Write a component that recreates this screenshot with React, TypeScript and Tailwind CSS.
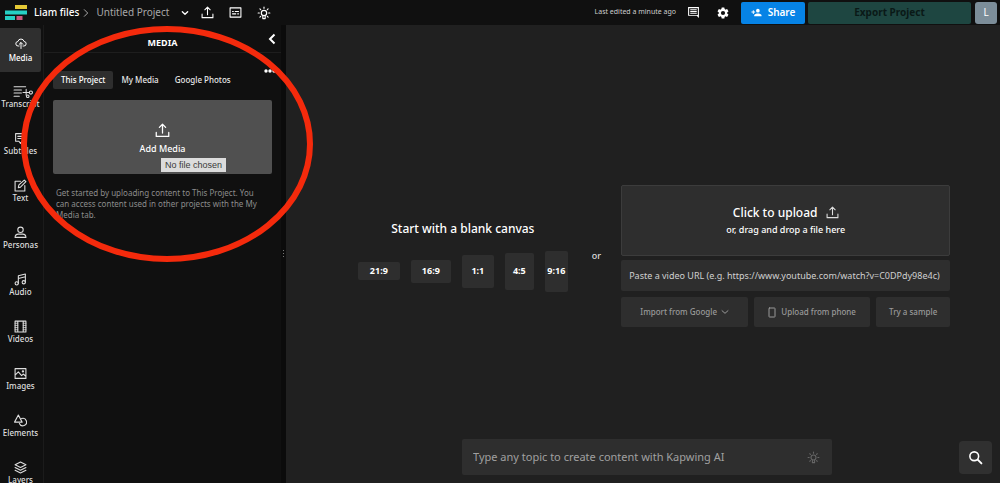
import type { ReactNode } from "react";

function Svg({ children, className, box = "0 0 24 24" }: { children: ReactNode; className: string; box?: string }) {
  return (
    <svg
      viewBox={box}
      className={className}
      fill="none"
      stroke="currentColor"
      strokeWidth="2"
      strokeLinecap="round"
      strokeLinejoin="round"
      aria-hidden="true"
    >
      {children}
    </svg>
  );
}

function UploadIcon({ className }: { className: string }) {
  return (
    <Svg className={className}>
      <path d="M2 15v6.500h20V15M12 16V2.500M7 7l5-5 5 5" />
    </Svg>
  );
}

function BulbIcon({ className }: { className: string }) {
  return (
    <Svg className={className}>
      <circle cx="12" cy="12" r="4.600" />
      <path d="M10 17v4.500h4V17M12 4V2M4 12H2M22 12h-2M6.300 6.300 5 5M17.700 6.300 19 5M6.300 17.700 5 19M17.700 17.700 19 19" />
    </Svg>
  );
}

const ICONS = {
  media: (
    <path d="M8 18H6.500A4.500 4.500 0 0 1 5.800 9a6.300 6.300 0 0 1 12.300 0 4.500 4.500 0 0 1-.6 9H16M12 23V11.500M8.500 14.500 12 11l3.500 3.500" />
  ),
  subtitles: <path d="M3 3h18v14h-6l-3 4-3-4H3zM7 8h10M7 12h7" />,
  text: <path d="M20 12v10H2V4h10M8 16l1-5 10-9 3 3-10 10z" />,
  personas: (
    <>
      <circle cx="12" cy="7" r="5" />
      <path d="M2 21c0-4 3-6 6-6h8c3 0 6 2 6 6z" />
    </>
  ),
  audio: (
    <>
      <circle cx="5" cy="19" r="3" />
      <circle cx="18" cy="17" r="3" />
      <path d="M8 19V5l13-3v15M8 10l13-3" />
    </>
  ),
  videos: (
    <>
      <path d="M2 2h20v20H2zM7 2v20M17 2v20" />
      <path d="M2 6h5M2 10h5M2 14h5M2 18h5M17 6h5M17 10h5M17 14h5M17 18h5" strokeWidth="1.400" />
    </>
  ),
  images: (
    <>
      <path d="M2 3h20v18H2zM2 15l6-6 6 7 3-3 5 4" />
      <circle cx="16.500" cy="8" r="1.200" />
    </>
  ),
  elements: (
    <>
      <path d="M8 2 1 15h14z" />
      <path d="M14 8.500a6.800 6.800 0 1 1-4 9" />
    </>
  ),
  layers: <path d="m12 2 10 5-10 5L2 7zM2 12l10 5 10-5M2 17l10 5 10-5" />,
};

const NAV: { label: string; icon: ReactNode }[] = [
  { label: "Media", icon: ICONS.media },
  { label: "Transcript", icon: null },
  { label: "Subtitles", icon: ICONS.subtitles },
  { label: "Text", icon: ICONS.text },
  { label: "Personas", icon: ICONS.personas },
  { label: "Audio", icon: ICONS.audio },
  { label: "Videos", icon: ICONS.videos },
  { label: "Images", icon: ICONS.images },
  { label: "Elements", icon: ICONS.elements },
  { label: "Layers", icon: ICONS.layers },
];

function Header() {
  return (
    <header className="flex h-[25px] shrink-0 items-center pl-[5px] pr-[3px]">
      <svg viewBox="0 0 22 15" className="h-[15px] w-[22px] shrink-0" aria-label="Kapwing">
        <rect x="10" y="0" width="12" height="4" fill="#e5c935" />
        <rect x="0" y="5.500" width="22" height="4" fill="#25cfc4" />
        <rect x="0" y="11" width="10" height="4" fill="#25cfc4" />
        <rect x="11.500" y="11" width="6" height="4" fill="#c9597e" />
      </svg>
      <a href="#files" className="ml-[7px] text-[10px] font-medium text-white">
        Liam files
      </a>
      <Svg className="ml-[3px] size-2 text-[#aaa]">
        <path d="m7 2 10 10L7 22" strokeWidth="3" />
      </Svg>
      <button className="ml-[6px] flex items-center gap-3 text-[10px] text-[#a8a8a8]">
        Untitled Project
        <Svg className="size-2 text-white">
          <path d="m4 8 8 8 8-8" strokeWidth="4" />
        </Svg>
      </button>
      <button aria-label="Upload" className="ml-3 text-white">
        <UploadIcon className="size-[13px]" />
      </button>
      <button aria-label="Subtitles" className="ml-[15px] text-white">
        <Svg className="size-[13px]">
          <path d="M2 3.500h20v17H2z" />
          <path d="M6.500 10h1.500M11.500 10h6M6.500 14.500h6M16 14.500h1.500" />
        </Svg>
      </button>
      <button aria-label="Tips" className="ml-[15px] text-white">
        <BulbIcon className="size-[14px]" />
      </button>
      <span className="ml-auto text-[7px] text-[#cdcdcd]">Last edited a minute ago</span>
      <button aria-label="Comments" className="ml-[11px] text-white">
        <svg viewBox="0 0 24 24" className="size-[13px]" fill="currentColor" aria-hidden="true">
          <path d="M22 2H2v16h16l4 4zM4 4h16v12.500H4zM6 6h12v1.800H6zM6 9.300h12v1.800H6zM6 12.600h12v1.800H6z" fillRule="evenodd" />
        </svg>
      </button>
      <button aria-label="Settings" className="ml-4 text-white">
        <svg viewBox="0 0 24 24" className="size-[14px]" fill="currentColor" aria-hidden="true">
          <path d="M19.140 12.940c.04-.3.060-.61.060-.94 0-.32-.02-.64-.07-.94l2.030-1.580a.49.49 0 0 0 .12-.61l-1.920-3.320a.49.49 0 0 0-.59-.22l-2.390.96a7 7 0 0 0-1.620-.94l-.36-2.540a.48.48 0 0 0-.48-.41h-3.840a.47.47 0 0 0-.47.41l-.36 2.540c-.59.24-1.130.57-1.620.94l-2.390-.96a.48.48 0 0 0-.59.22L2.740 8.870a.47.47 0 0 0 .12.61l2.030 1.580c-.05.3-.09.63-.09.94s.02.64.07.94l-2.030 1.580a.49.49 0 0 0-.12.61l1.920 3.320c.12.22.37.29.59.22l2.390-.96c.5.38 1.030.7 1.620.94l.36 2.540c.05.24.24.41.48.41h3.840c.24 0 .44-.17.47-.41l.36-2.540a7 7 0 0 0 1.620-.94l2.390.96c.22.08.47 0 .59-.22l1.920-3.320a.47.47 0 0 0-.12-.61zM12 15.600a3.600 3.600 0 1 1 0-7.200 3.600 3.600 0 0 1 0 7.200z" />
        </svg>
      </button>
      <button className="ml-[11px] flex h-[22px] w-16 items-center justify-center gap-[6px] rounded-[2px] bg-[#0683e6] text-[10px] font-semibold text-white">
        <svg viewBox="0 0 24 24" className="size-[11px]" fill="currentColor" aria-hidden="true">
          <path d="M15 12a4 4 0 1 0 0-8 4 4 0 0 0 0 8zM6 10V7H4v3H1v2h3v3h2v-3h3v-2zM15 14c-2.670 0-8 1.340-8 4v2h16v-2c0-2.660-5.330-4-8-4z" />
        </svg>
        Share
      </button>
      <button className="ml-[3px] h-[22px] w-[163px] rounded-[2px] bg-[#1e4641] text-[10px] font-bold text-[#0a1917]">
        Export Project
      </button>
      <button className="ml-1 size-[22px] rounded-[3px] bg-[#7c8d99] text-[10px] text-white">L</button>
    </header>
  );
}

function Sidebar() {
  return (
    <nav className="flex w-11 shrink-0 flex-col gap-[3px] overflow-hidden border-r border-[#1b1b1b] pt-[3px]">
      {NAV.map(({ label, icon }, index) => (
        <button
          key={label}
          className={
            index === 0
              ? "flex h-11 w-[41px] shrink-0 flex-col items-center justify-center gap-1 rounded-r-[2px] bg-[#2f2f2f] text-[8px] leading-[10px] font-medium text-white"
              : "flex h-11 w-[41px] shrink-0 flex-col items-center justify-center gap-[2px] rounded-r-[2px] pb-[2px] text-[8px] leading-[8px] font-medium text-[#dedede]"
          }
        >
          {icon ? (
            <Svg className={index === 0 ? "size-3" : "size-[13px]"}>{icon}</Svg>
          ) : (
            <Svg className="ml-1 h-[13px] w-5" box="0 0 38 24">
              <path d="M2 3h22M2 9h14M2 15h14M2 21h10M19 14h12M25 8v11" />
              <circle cx="34" cy="14" r="3" />
              <circle cx="28" cy="21" r="2.500" />
            </Svg>
          )}
          {label}
        </button>
      ))}
    </nav>
  );
}

function MediaPanel() {
  return (
    <section className="relative w-[237px] shrink-0">
      <div className="relative flex h-7 items-center justify-center border-b border-[#1e1e1e] pt-2">
        <h2 className="text-[9px] font-bold text-white">MEDIA</h2>
        <button aria-label="Collapse panel" className="absolute top-2 right-[3px] text-white">
          <Svg className="size-3">
            <path d="m17 3-9 9 9 9" strokeWidth="4" strokeLinecap="butt" strokeLinejoin="miter" />
          </Svg>
        </button>
      </div>
      <button aria-label="More options" className="absolute top-11 right-1 text-white">
        <svg viewBox="0 0 13 4" className="h-1 w-[13px]" fill="currentColor" aria-hidden="true">
          <circle cx="2" cy="2" r="1.700" />
          <circle cx="6" cy="2" r="1.700" />
          <circle cx="10" cy="2" r="1.700" />
        </svg>
      </button>
      <div className="mt-[18px] flex px-[9px] text-[8px] font-medium text-[#e8e8e8]">
        <button className="h-[18px] rounded-[2px] bg-[#2e2e2e] px-2 text-white">This Project</button>
        <button className="h-[18px] px-2">My Media</button>
        <button className="h-[18px] px-2">Google Photos</button>
      </div>
      <div className="relative mx-[9px] mt-[11px]">
        <button className="flex h-[74px] w-full flex-col items-center justify-center gap-1 rounded-[2px] bg-[#505050] pt-1 text-[9px] font-medium text-white">
          <UploadIcon className="size-[15px]" />
          Add Media
        </button>
        <span className="absolute top-[58px] left-[108px] h-[14px] bg-[#dcdcdc] px-1 font-['Liberation_Sans',sans-serif] text-[9px] leading-[14px] whitespace-nowrap text-[#3a3a3a]">
          No file chosen
        </span>
      </div>
      <p className="mt-[13px] pr-3 pl-3 text-[8px] leading-[11px] text-[#8c8c8c]">
        Get started by uploading content to This Project. You can access content used in other projects with the My
        Media tab.
      </p>
    </section>
  );
}

function BlankCanvas() {
  const box = "flex items-center justify-center rounded-[2px] bg-[#2e2e2e]";
  return (
    <section className="flex flex-col items-center gap-[14px]">
      <h2 className="text-[12px] leading-4 font-medium text-white">Start with a blank canvas</h2>
      <div className="flex items-center gap-[11px] text-[9px] font-bold text-white">
        <button className={`${box} h-[18px] w-[42px]`}>21:9</button>
        <button className={`${box} h-[23px] w-10`}>16:9</button>
        <button className={`${box} h-[33px] w-8`}>1:1</button>
        <button className={`${box} h-[37px] w-[29px]`}>4:5</button>
        <button className={`${box} h-[41px] w-[23px]`}>9:16</button>
      </div>
    </section>
  );
}

function UploadOptions() {
  return (
    <section className="flex w-[329px] flex-col">
      <button className="flex h-[71px] flex-col items-center justify-center rounded-[2px] border border-[#3c3c3c] bg-[#2e2e2e] text-white">
        <span className="flex items-center gap-2 text-[12px] leading-[18px] font-medium">
          Click to upload
          <UploadIcon className="size-[13px] text-[#dedede]" />
        </span>
        <span className="text-[9px] leading-4 font-medium">or, drag and drop a file here</span>
      </button>
      <input
        type="url"
        aria-label="Video URL"
        placeholder="Paste a video URL (e.g. https://www.youtube.com/watch?v=C0DPdy98e4c)"
        className="mt-1 h-[31px] rounded-[2px] bg-[#2e2e2e] px-2 text-[9px] text-white outline-none placeholder:text-[#d0d0d0]"
      />
      <div className="mt-[6px] flex h-[30px] gap-[6px] text-[8px] font-medium text-[#999]">
        <button className="flex flex-1 items-center justify-center gap-1 rounded-[2px] bg-[#2e2e2e]">
          Import from Google
          <Svg className="size-2">
            <path d="m3 8 9 8 9-8" strokeWidth="3" />
          </Svg>
        </button>
        <button className="flex w-[116px] items-center justify-center gap-[5px] rounded-[2px] bg-[#2e2e2e]">
          <Svg className="h-[11px] w-2" box="0 0 16 22">
            <rect x="2" y="2" width="12" height="18" rx="1" />
          </Svg>
          Upload from phone
        </button>
        <button className="w-[74px] rounded-[2px] bg-[#2e2e2e]">Try a sample</button>
      </div>
    </section>
  );
}

export default function App() {
  return (
    <div className="relative flex h-screen flex-col overflow-hidden bg-[#101010] font-['Noto_Sans',sans-serif]">
      <Header />
      <div className="flex min-h-0 flex-1">
        <Sidebar />
        <MediaPanel />
        <div className="flex w-[5px] shrink-0 items-center justify-center bg-[#0b0b0b]" role="separator">
          <svg viewBox="0 0 2 8" className="h-2 w-[2px]" fill="#777" aria-hidden="true">
            <rect width="1" height="1" />
            <rect y="3" width="1" height="1" />
            <rect y="6" width="1" height="1" />
          </svg>
        </div>
        <main className="grid min-w-0 flex-1 grid-cols-1 grid-rows-1 bg-[#202020]">
          <div className="col-start-1 row-start-1 flex items-center justify-center pt-1 pl-[22px]">
            <BlankCanvas />
            <span className="mr-5 ml-6 text-[9px] font-medium text-[#dedede]">or</span>
            <UploadOptions />
          </div>
          <div className="col-start-1 row-start-1 flex items-center self-end pr-2 pb-2 pl-4">
            <div className="flex-1" />
            <label className="flex h-9 w-[370px] items-center rounded-[2px] bg-[#2e2e2e] pr-3 pl-[11px] text-[#666]">
              <input
                type="text"
                aria-label="Topic"
                placeholder="Type any topic to create content with Kapwing AI"
                className="min-w-0 flex-1 bg-transparent text-[11px] text-white outline-none placeholder:text-[#a0a0a0]"
              />
              <BulbIcon className="size-[13px]" />
            </label>
            <div className="flex flex-1 justify-end">
              <button
                aria-label="Search"
                className="flex size-[33px] items-center justify-center rounded-[4px] bg-[#303030] text-white"
              >
                <Svg className="size-[15px]">
                  <circle cx="10" cy="10" r="7" strokeWidth="2.500" />
                  <path d="m15.500 15.500 6 6" strokeWidth="3" />
                </Svg>
              </button>
            </div>
          </div>
        </main>
      </div>
      <svg
        viewBox="0 0 294 238"
        className="pointer-events-none absolute top-[26px] left-5 h-[238px] w-[294px]"
        fill="none"
        stroke="#f42a0c"
        strokeWidth="6"
        aria-hidden="true"
      >
        <ellipse cx="147" cy="118" rx="143" ry="115" />
      </svg>
    </div>
  );
}
